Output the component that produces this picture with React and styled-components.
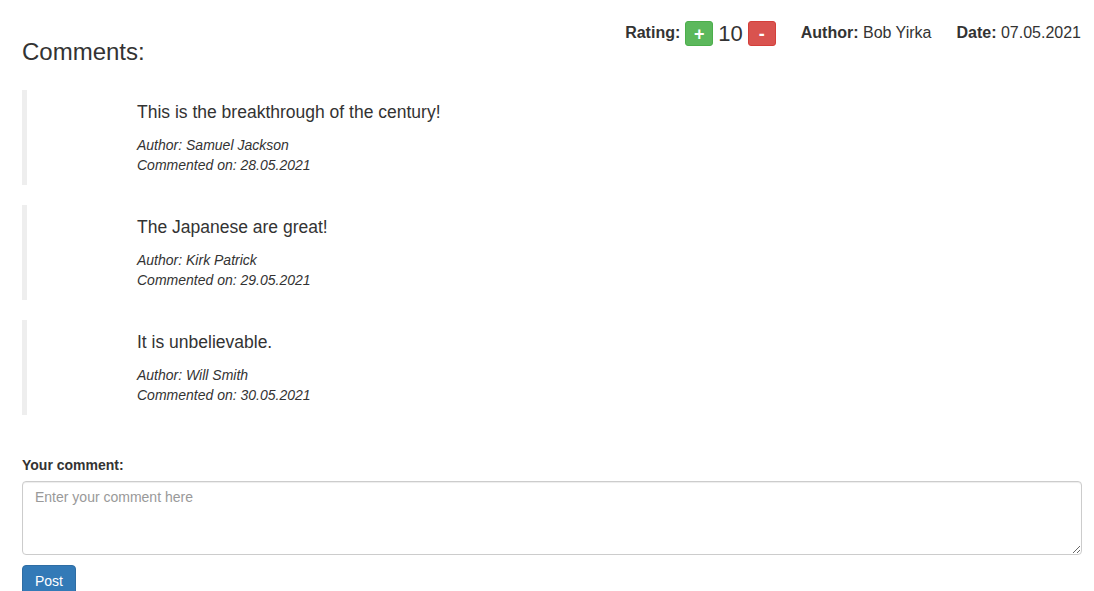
import styled, { createGlobalStyle } from "styled-components";

const comments = [
  { text: "This is the breakthrough of the century!", author: "Samuel Jackson", date: "28.05.2021" },
  { text: "The Japanese are great!", author: "Kirk Patrick", date: "29.05.2021" },
  { text: "It is unbelievable.", author: "Will Smith", date: "30.05.2021" },
];

function App() {
  return (
    <>
      <GlobalStyle />
      <Page>
        <Header>
          <Title>Comments:</Title>
          <Meta>
            <Rating>
              <b>Rating:</b>
              <VoteButton $kind="up">+</VoteButton>
              <Score>10</Score>
              <VoteButton $kind="down">-</VoteButton>
            </Rating>
            <MetaItem>
              <b>Author:</b> Bob Yirka
            </MetaItem>
            <MetaItem>
              <b>Date:</b> 07.05.2021
            </MetaItem>
          </Meta>
        </Header>

        <CommentList>
          {comments.map((c) => (
            <Comment key={c.date}>
              <CommentText>{c.text}</CommentText>
              <CommentInfo>
                Author: {c.author}
                <br />
                Commented on: {c.date}
              </CommentInfo>
            </Comment>
          ))}
        </CommentList>

        <Form>
          <Label htmlFor="comment">Your comment:</Label>
          <TextArea id="comment" rows={3} placeholder="Enter your comment here" />
          <PostButton>Post</PostButton>
        </Form>
      </Page>
    </>
  );
}

const GlobalStyle = createGlobalStyle`
  body {
    margin: 0;
    font-family: "Liberation Sans", Arial, sans-serif;
    font-size: 14px;
    line-height: 1.42857;
    color: #333;
    background: #fff;
  }
  * {
    box-sizing: border-box;
  }
`;

const Page = styled.div`
  padding: 0 12px 0 22px;
`;

const Header = styled.div`
  display: flex;
  justify-content: space-between;
  align-items: flex-start;
`;

const Title = styled.h3`
  margin: 39px 0 0;
  font-size: 24px;
  font-weight: 400;
  line-height: 1.1;
`;

const Meta = styled.div`
  display: flex;
  align-items: center;
  column-gap: 25px;
  margin: 21px 1px 0 0;
  font-size: 16px;
`;

const Rating = styled.div`
  display: flex;
  align-items: center;
  column-gap: 5px;
`;

const MetaItem = styled.div`
  white-space: pre;
`;

const VoteButton = styled.button`
  width: 28px;
  height: 25px;
  padding: 0;
  border: 1px solid ${(p) => (p.$kind === "up" ? "#4cae4c" : "#d43f3a")};
  border-radius: 3px;
  background: ${(p) => (p.$kind === "up" ? "#5cb85c" : "#d9534f")};
  color: #fff;
  font-family: inherit;
  font-size: 18px;
  font-weight: 700;
  line-height: 1;
`;

const Score = styled.span`
  font-size: 22px;
  line-height: 1;
`;

const CommentList = styled.div`
  display: flex;
  flex-direction: column;
  row-gap: 20px;
  margin-top: 25px;
`;

const Comment = styled.blockquote`
  margin: 0;
  padding: 10px 20px 10px 110px;
  border-left: 5px solid #eee;
`;

const CommentText = styled.p`
  margin: 0 0 10px;
  font-size: 17.5px;
`;

const CommentInfo = styled.footer`
  font-size: 14px;
  font-style: italic;
  line-height: 20px;
`;

const Form = styled.div`
  display: flex;
  flex-direction: column;
  align-items: flex-start;
  margin-top: 41px;
`;

const Label = styled.label`
  margin-bottom: 5px;
  font-weight: 700;
`;

const TextArea = styled.textarea`
  width: 100%;
  height: 74px;
  padding: 6px 12px;
  border: 1px solid #ccc;
  border-radius: 4px;
  box-shadow: inset 0 1px 1px rgba(0, 0, 0, 0.075);
  font-family: inherit;
  font-size: 14px;
  line-height: 1.42857;
  color: #555;

  &::placeholder {
    color: #999;
  }
`;

const PostButton = styled.button`
  margin-top: 10px;
  padding: 6px 12px;
  border: 1px solid #2e6da4;
  border-radius: 4px;
  background: #337ab7;
  color: #fff;
  font-family: inherit;
  font-size: 14px;
  line-height: 1.42857;
`;

export default App;
